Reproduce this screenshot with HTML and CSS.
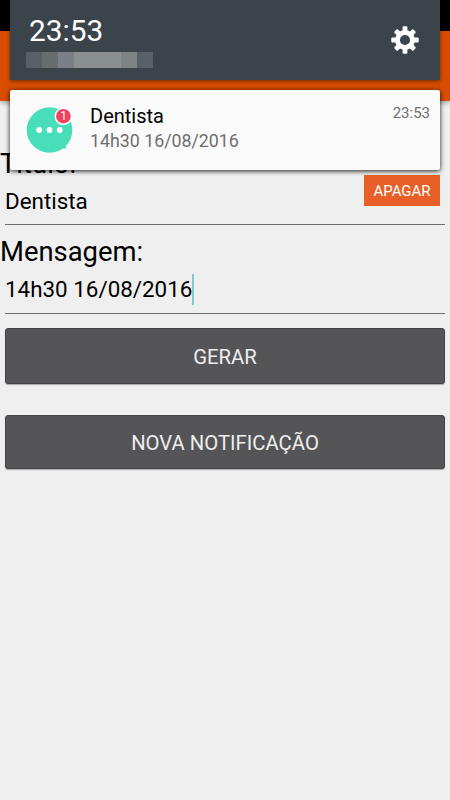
FILE: index.html
```html
<!DOCTYPE html>
<html lang="pt-BR">
<head>
  <meta charset="UTF-8" />
  <meta name="viewport" content="width=device-width, initial-scale=1.0"/>
  <title>Notificação</title>
  <link rel="stylesheet" href="styles.css">
</head>
<body>
  <div class="status-bar"></div>
  <header class="app-bar"></header>

  <main class="form">
    <div class="label-row">
      <div class="label">Título:</div>
      <button type="button" class="delete-btn">APAGAR</button>
    </div>
    <div class="field">Dentista</div>

    <div class="label message-label">Mensagem:</div>
    <div class="field message-field">14h30 16/08/2016<span class="caret"></span></div>

    <button type="button" class="btn generate-btn">GERAR</button>
    <button type="button" class="btn new-btn">NOVA NOTIFICAÇÃO</button>
  </main>

  <!-- Notification shade -->
  <div class="shade">
    <div class="shade-header">
      <div class="shade-info">
        <div class="clock">23:53</div>
        <div class="date-mask">
          <span></span><span></span><span></span><span></span><span></span><span></span><span></span><span></span>
        </div>
      </div>
      <svg class="gear" viewBox="0 0 28 28" width="28" height="28">
        <g fill="#fff">
          <rect x="11.6" y="0.3" width="4.8" height="27.4" rx="1"/>
          <rect x="11.6" y="0.6" width="4.8" height="26.8" rx="1" transform="rotate(45 14 14)"/>
          <rect x="11.6" y="0.3" width="4.8" height="27.4" rx="1" transform="rotate(90 14 14)"/>
          <rect x="11.6" y="0.6" width="4.8" height="26.8" rx="1" transform="rotate(135 14 14)"/>
          <circle cx="14" cy="14" r="9.9"/>
        </g>
        <circle cx="14" cy="14" r="5.1" fill="#3b444b"/>
      </svg>
    </div>

    <div class="notification">
      <div class="notification-icon">
        <svg viewBox="0 0 48 48" width="48" height="48">
          <circle cx="23.5" cy="24" r="22.8" fill="#48deb9"/>
          <path d="M46.2 25 Q45.5 34 39.8 39 Q39.3 41 41 42.5 Q37 43 33 41 Z" fill="#48deb9"/>
          <circle cx="13.2" cy="24" r="2.9" fill="#fff"/>
          <circle cx="23.5" cy="24" r="2.9" fill="#fff"/>
          <circle cx="33.7" cy="24" r="2.9" fill="#fff"/>
          <circle cx="37.4" cy="10.2" r="8.8" fill="#fff"/>
          <circle cx="37.4" cy="10.2" r="7.3" fill="#f2405f"/>
        </svg>
        <span class="badge">1</span>
      </div>
      <div class="notification-text">
        <div class="notification-title">Dentista</div>
        <div class="notification-message">14h30 16/08/2016</div>
      </div>
      <div class="notification-time">23:53</div>
    </div>
  </div>
</body>
</html>
```

FILE: styles.css
```css
* {
  margin: 0;
  padding: 0;
  box-sizing: border-box;
  font-family: Roboto, 'Liberation Sans', sans-serif;
}

body {
  position: relative;
  height: 800px;
  overflow: hidden;
  background-color: #efefef;
  color: #000;
}

button {
  border: none;
  cursor: pointer;
}

.status-bar {
  height: 31px;
  background-color: #000;
}

.app-bar {
  height: 70px;
  background-color: #d84d00;
  box-shadow: 0 2px 5px rgba(0,0,0,0.3);
}

/* Form */
.form {
  display: flex;
  flex-direction: column;
  padding-top: 46px;
}

.label-row {
  display: flex;
  justify-content: space-between;
  align-items: flex-start;
  height: 33px;
}

.label {
  font-size: 27.4px;
  line-height: 34px;
}

.delete-btn {
  width: 76px;
  height: 31px;
  margin: 28px 10px 0 0;
  background-color: #e85f27;
  color: #fff;
  font-size: 15px;
}

.field {
  display: flex;
  align-items: center;
  height: 45px;
  margin: 0 5px;
  padding-bottom: 2px;
  border-bottom: 1px solid #6b6b6b;
  font-size: 22.4px;
  line-height: 42px;
}

.message-label {
  margin-top: 10px;
}

.message-field {
  padding-bottom: 4px;
  line-height: 40px;
}

.caret {
  width: 2px;
  height: 31px;
  background-color: #80cbc4;
}

.btn {
  margin: 0 5px;
  padding-top: 1px;
  border: 1px solid #454547;
  border-radius: 3px;
  background-color: #555557;
  box-shadow: 0 1px 1px rgba(0,0,0,0.3);
  color: #eee;
  font-size: 20.3px;
}

.generate-btn {
  height: 56px;
  margin-top: 14px;
}

.new-btn {
  height: 54px;
  margin-top: 31px;
  padding-top: 2px;
}

/* Shade */
.shade {
  position: absolute;
  top: 0;
  left: 10px;
  right: 10px;
  display: flex;
  flex-direction: column;
  gap: 10px;
}

.shade-header {
  display: flex;
  justify-content: space-between;
  height: 80px;
  padding: 13px 21px 0 16px;
  background-color: #3b444b;
  box-shadow: 0 1px 4px rgba(0,0,0,0.5);
}

.clock {
  padding-left: 3px;
  color: #fff;
  font-size: 29.8px;
  line-height: 36px;
}

.date-mask {
  display: flex;
  width: 127px;
  height: 16px;
  margin-top: 3px;
}

.date-mask span {
  flex: 1;
  background-color: #8a8f92;
}

.date-mask span:nth-child(1),
.date-mask span:nth-child(8) {
  background-color: #575f67;
}

.date-mask span:nth-child(2) {
  background-color: #656d6f;
}

.date-mask span:nth-child(3) {
  background-color: #7b7f87;
}

.date-mask span:nth-child(7) {
  background-color: #7e8385;
}

.gear {
  margin-top: 13px;
}

.notification {
  display: flex;
  height: 80px;
  padding: 0 10px 0 16px;
  border-radius: 2px;
  background-color: #fafafa;
  box-shadow: 0 1px 5px rgba(0,0,0,0.9);
}

.notification-icon {
  position: relative;
  width: 48px;
  height: 48px;
  margin-top: 16px;
}

.badge {
  position: absolute;
  top: 3px;
  left: 30px;
  width: 15px;
  color: #fff;
  font-size: 12px;
  line-height: 15px;
  text-align: center;
}

.notification-text {
  flex: 1;
  margin: 13px 0 0 16px;
}

.notification-title {
  font-size: 20px;
  line-height: 26px;
}

.notification-message {
  color: #6f6f6f;
  font-size: 17.8px;
  line-height: 24px;
}

.notification-time {
  margin-top: 13px;
  color: #6f6f6f;
  font-size: 15px;
  line-height: 20px;
}
```
